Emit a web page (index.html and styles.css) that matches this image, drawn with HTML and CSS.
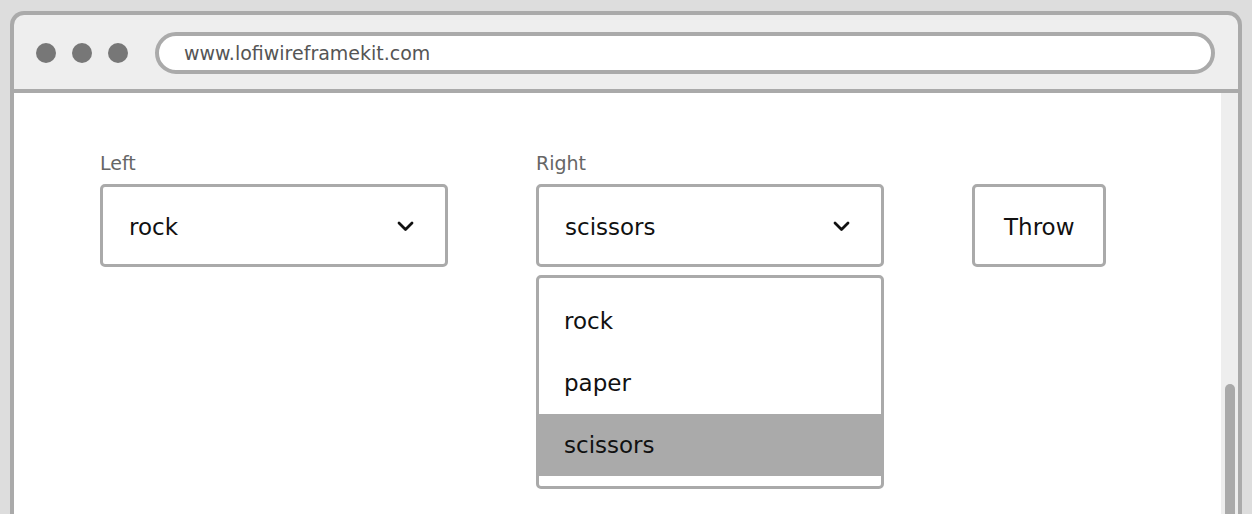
FILE: index.html
```html
<!DOCTYPE html>
<html>
<head>
<meta charset="utf-8">
<link rel="stylesheet" href="styles.css">
</head>
<body>
<div class="frame">
  <div class="titlebar">
    <div class="dots"><span class="dot"></span><span class="dot"></span><span class="dot"></span></div>
    <div class="url">www.lofiwireframekit.com</div>
  </div>
  <div class="viewport">
    <div class="content">
      <div class="field">
        <div class="label">Left</div>
        <div class="select">
          <span>rock</span>
          <svg class="chev" width="17" height="11" viewBox="0 0 17 11"><polyline points="2,2 8.5,8.5 15,2" fill="none" stroke="#111" stroke-width="2.8" stroke-linecap="round" stroke-linejoin="round"/></svg>
        </div>
      </div>
      <div class="field">
        <div class="label">Right</div>
        <div class="select">
          <span>scissors</span>
          <svg class="chev" width="17" height="11" viewBox="0 0 17 11"><polyline points="2,2 8.5,8.5 15,2" fill="none" stroke="#111" stroke-width="2.8" stroke-linecap="round" stroke-linejoin="round"/></svg>
        </div>
        <ul class="menu">
          <li>rock</li>
          <li>paper</li>
          <li class="active">scissors</li>
        </ul>
      </div>
      <div class="field btnfield">
        <button class="btn">Throw</button>
      </div>
    </div>
    <div class="scrolltrack"><div class="thumb"></div></div>
  </div>
</div>
</body>
</html>
```
FILE: styles.css
```css
html, body {
  margin: 0;
  padding: 0;
  height: 100%;
  overflow: hidden;
}
body {
  background: #dddddd;
  font-family: "DejaVu Sans", "Liberation Sans", sans-serif;
  color: #111;
}
.frame {
  margin: 11px 10px 0 10px;
  border: 4px solid #aaaaaa;
  border-bottom: none;
  border-radius: 14px 14px 0 0;
  height: calc(100vh - 11px);
  box-sizing: border-box;
  background: #eeeeee;
  display: flex;
  flex-direction: column;
}
.titlebar {
  flex: none;
  height: 78px;
  box-sizing: border-box;
  border-bottom: 4px solid #aaaaaa;
  display: flex;
  align-items: center;
  padding: 1px 23px 0 22px;
}
.dots {
  display: flex;
  gap: 16px;
  margin-right: 27px;
}
.dot {
  width: 20px;
  height: 20px;
  border-radius: 50%;
  background: #777777;
}
.url {
  flex: 1;
  height: 42px;
  box-sizing: border-box;
  border: 4px solid #aaaaaa;
  border-radius: 22px;
  background: #fff;
  display: flex;
  align-items: center;
  padding-left: 25px;
  font-size: 19px;
  color: #555;
}
.viewport {
  flex: 1;
  min-height: 0;
  display: flex;
  background: #fff;
  overflow: hidden;
}
.content {
  flex: 1;
  display: flex;
  gap: 88px;
  padding: 58px 0 0 86px;
  align-items: flex-start;
}
.field {
  width: 348px;
  display: flex;
  flex-direction: column;
}
.label {
  font-size: 19px;
  line-height: 24px;
  color: #666;
  height: 24px;
  margin-bottom: 9px;
}
.select {
  height: 83px;
  box-sizing: border-box;
  border: 3px solid #aaaaaa;
  border-radius: 5px;
  display: flex;
  align-items: center;
  justify-content: space-between;
  padding: 2px 31px 0 26px;
  font-size: 23px;
}
.chev {
  display: block;
}
.menu {
  list-style: none;
  margin: 8px 0 0 0;
  padding: 12px 0 10px 0;
  border: 3px solid #aaaaaa;
  border-radius: 5px;
  font-size: 23px;
}
.menu li {
  height: 62px;
  display: flex;
  align-items: center;
  padding-left: 25px;
}
.menu li.active {
  background: #aaaaaa;
}
.btnfield {
  width: auto;
  padding-top: 33px;
}
.btn {
  height: 83px;
  box-sizing: border-box;
  border: 3px solid #aaaaaa;
  border-radius: 5px;
  background: #fff;
  padding: 2px 29px 0;
  font-family: inherit;
  font-size: 23px;
  color: #111;
}
.scrolltrack {
  width: 17px;
  background: #eeeeee;
  display: flex;
  justify-content: center;
}
.thumb {
  width: 10px;
  margin-top: 291px;
  margin-left: 1px;
  border-radius: 5px 5px 0 0;
  background: #aaaaaa;
}
```
